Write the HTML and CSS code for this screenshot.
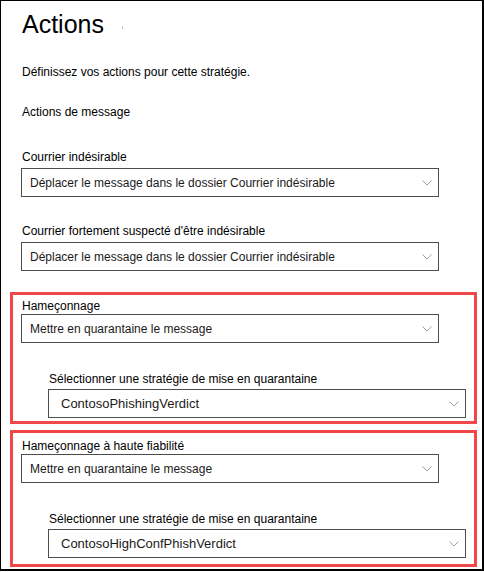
FILE: index.html
```html
<!DOCTYPE html>
<html lang="fr">
<head>
<meta charset="utf-8">
<title>Actions</title>
<link rel="stylesheet" href="styles.css">
</head>
<body>
<div class="frame">
  <h1 class="title">Actions<span class="mark"></span></h1>
  <p class="desc">Définissez vos actions pour cette stratégie.</p>
  <p class="section">Actions de message</p>

  <div class="field field-first">
    <div class="label">Courrier indésirable</div>
    <div class="dd"><span>Déplacer le message dans le dossier Courrier indésirable</span><svg class="chev" width="10" height="6" viewBox="0 0 10 6"><polyline points="0.5,0.5 5,5 9.5,0.5"/></svg></div>
  </div>

  <div class="field field-second">
    <div class="label">Courrier fortement suspecté d'être indésirable</div>
    <div class="dd"><span>Déplacer le message dans le dossier Courrier indésirable</span><svg class="chev" width="10" height="6" viewBox="0 0 10 6"><polyline points="0.5,0.5 5,5 9.5,0.5"/></svg></div>
  </div>

  <div class="box">
    <div class="label label-main">Hameçonnage</div>
    <div class="dd"><span>Mettre en quarantaine le message</span><svg class="chev" width="10" height="6" viewBox="0 0 10 6"><polyline points="0.5,0.5 5,5 9.5,0.5"/></svg></div>
    <div class="nested">
      <div class="label label-nested">Sélectionner une stratégie de mise en quarantaine</div>
      <div class="dd dd-nested"><span>ContosoPhishingVerdict</span><svg class="chev" width="10" height="6" viewBox="0 0 10 6"><polyline points="0.5,0.5 5,5 9.5,0.5"/></svg></div>
    </div>
  </div>

  <div class="box box-tall">
    <div class="label label-main">Hameçonnage à haute fiabilité</div>
    <div class="dd"><span>Mettre en quarantaine le message</span><svg class="chev" width="10" height="6" viewBox="0 0 10 6"><polyline points="0.5,0.5 5,5 9.5,0.5"/></svg></div>
    <div class="nested">
      <div class="label label-nested">Sélectionner une stratégie de mise en quarantaine</div>
      <div class="dd dd-nested"><span>ContosoHighConfPhishVerdict</span><svg class="chev" width="10" height="6" viewBox="0 0 10 6"><polyline points="0.5,0.5 5,5 9.5,0.5"/></svg></div>
    </div>
  </div>
</div>
</body>
</html>
```
FILE: styles.css
```css
html, body {
  margin: 0;
  padding: 0;
  background: #ffffff;
}

body {
  font-family: "Liberation Sans", Arial, sans-serif;
  font-size: 12px;
  line-height: 16px;
  color: #1b1a19;
}

.frame {
  width: 484px;
  height: 571px;
  box-sizing: border-box;
  border-style: solid;
  border-color: #000000;
  border-width: 1px 2px 2px 1px;
  padding: 7px 0 0 20px;
  overflow: hidden;
}

.title {
  margin: 0;
  font-size: 25px;
  line-height: 32px;
  height: 32px;
  font-weight: 400;
  color: #000000;
  padding-left: 1px;
}

.mark {
  display: inline-block;
  width: 1px;
  height: 3px;
  margin-left: 18px;
  vertical-align: 4px;
  background: #c8c6c4;
}

.desc {
  margin: 24px 0 0 1px;
  color: #000000;
}

.section {
  margin: 24px 0 0 1px;
  color: #000000;
}

.field-first {
  margin-top: 29px;
}

.field-second {
  margin-top: 26px;
}

.label {
  height: 16px;
  margin-bottom: 3px;
  padding-left: 1px;
  white-space: nowrap;
  color: #000000;
}

.label-main {
  margin-bottom: 0;
}

.label-nested {
  margin-bottom: 2px;
}

.dd {
  width: 418px;
  height: 29px;
  box-sizing: border-box;
  border: 1px solid #4e4d4c;
  display: flex;
  align-items: center;
  justify-content: space-between;
  padding: 0 6px 0 8px;
  white-space: nowrap;
  color: #1b1a19;
}

.dd-nested {
  padding-left: 12px;
  font-size: 13px;
}

.chev {
  flex: none;
  fill: none;
  stroke: #a19f9d;
  stroke-width: 1;
}

.box {
  margin: 21px 0 0 -11px;
  width: 467px;
  box-sizing: border-box;
  border: 3px solid #f04848;
  padding: 3px 0 3px 8px;
}

.box-tall {
  margin-top: 6px;
  padding-top: 5px;
  padding-bottom: 6px;
}

.nested {
  margin: 28px 0 0 27px;
}
```
